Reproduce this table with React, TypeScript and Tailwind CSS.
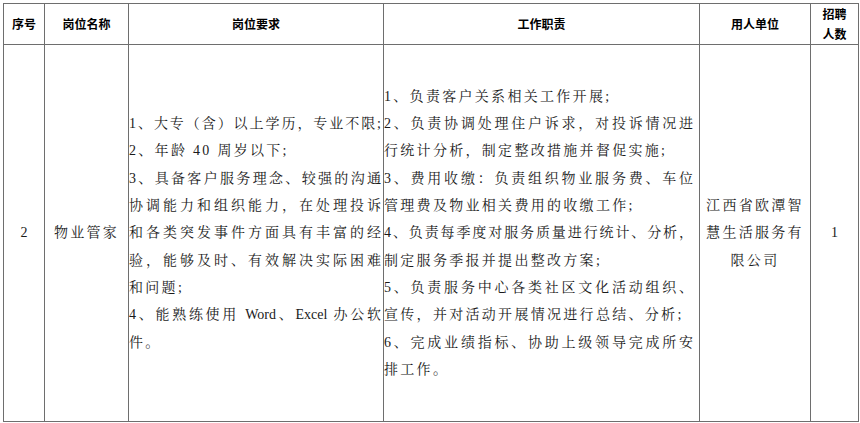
import React from 'react';

type Line = { text: string; full?: boolean };

const requirements: Line[] = [
  { text: '1、大专（含）以上学历，专业不限;', full: true },
  { text: '2、年龄 40 周岁以下;' },
  { text: '3、具备客户服务理念、较强的沟通', full: true },
  { text: '协调能力和组织能力，在处理投诉', full: true },
  { text: '和各类突发事件方面具有丰富的经', full: true },
  { text: '验，能够及时、有效解决实际困难', full: true },
  { text: '和问题;' },
  { text: '4、能熟练使用 Word、Excel 办公软', full: true },
  { text: '件。' },
];

const duties: Line[] = [
  { text: '1、负责客户关系相关工作开展;' },
  { text: '2、负责协调处理住户诉求，对投诉情况进', full: true },
  { text: '行统计分析，制定整改措施并督促实施;' },
  { text: '3、费用收缴：负责组织物业服务费、车位', full: true },
  { text: '管理费及物业相关费用的收缴工作;' },
  { text: '4、负责每季度对服务质量进行统计、分析，', full: true },
  { text: '制定服务季报并提出整改方案;' },
  { text: '5、负责服务中心各类社区文化活动组织、', full: true },
  { text: '宣传，并对活动开展情况进行总结、分析;' },
  { text: '6、完成业绩指标、协助上级领导完成所安', full: true },
  { text: '排工作。' },
];

const serif = "font-['Liberation_Serif','Noto_Serif_CJK_SC','Noto_Sans_CJK_SC',serif]";
const head =
  "flex flex-col items-center justify-center border-r border-b border-[#6e6e6e] font-['Noto_Sans_CJK_SC',sans-serif] text-[12px] font-bold leading-[20px] text-black";
const cell = `flex flex-col justify-center border-r border-b border-[#6e6e6e] ${serif} text-[14px] leading-[27.3px] text-[#1a1a1a]`;

const Lines = ({ lines }: { lines: Line[] }) => (
  <>
    {lines.map((line, i) => (
      <div
        key={i}
        className={
          line.full
            ? 'whitespace-nowrap text-justify [text-align-last:justify]'
            : 'whitespace-nowrap tracking-[2.3px]'
        }
      >
        {line.text}
      </div>
    ))}
  </>
);

export default function App() {
  return (
    <div className="min-h-screen bg-white pt-[3px] pl-[3px]">
      <div className="grid w-[856px] grid-cols-[41px_84px_255px_316px_111px_48px] grid-rows-[41px_377px] border-l border-t border-[#6e6e6e]">
        <div className={head}>序号</div>
        <div className={head}>岗位名称</div>
        <div className={head}>岗位要求</div>
        <div className={head}>工作职责</div>
        <div className={head}>用人单位</div>
        <div className={head}>
          <span>招聘</span>
          <span>人数</span>
        </div>

        <div className={`${cell} items-center`}>2</div>
        <div className={`${cell} items-center tracking-[2.3px]`}>物业管家</div>
        <div className={`${cell} pr-[2px]`}>
          <Lines lines={requirements} />
        </div>
        <div className={`${cell} pr-[6px]`}>
          <Lines lines={duties} />
        </div>
        <div className={`${cell} items-center text-center tracking-[2.3px]`}>
          <div>江西省欧潭智</div>
          <div>慧生活服务有</div>
          <div>限公司</div>
        </div>
        <div className={`${cell} items-center`}>1</div>
      </div>
    </div>
  );
}
